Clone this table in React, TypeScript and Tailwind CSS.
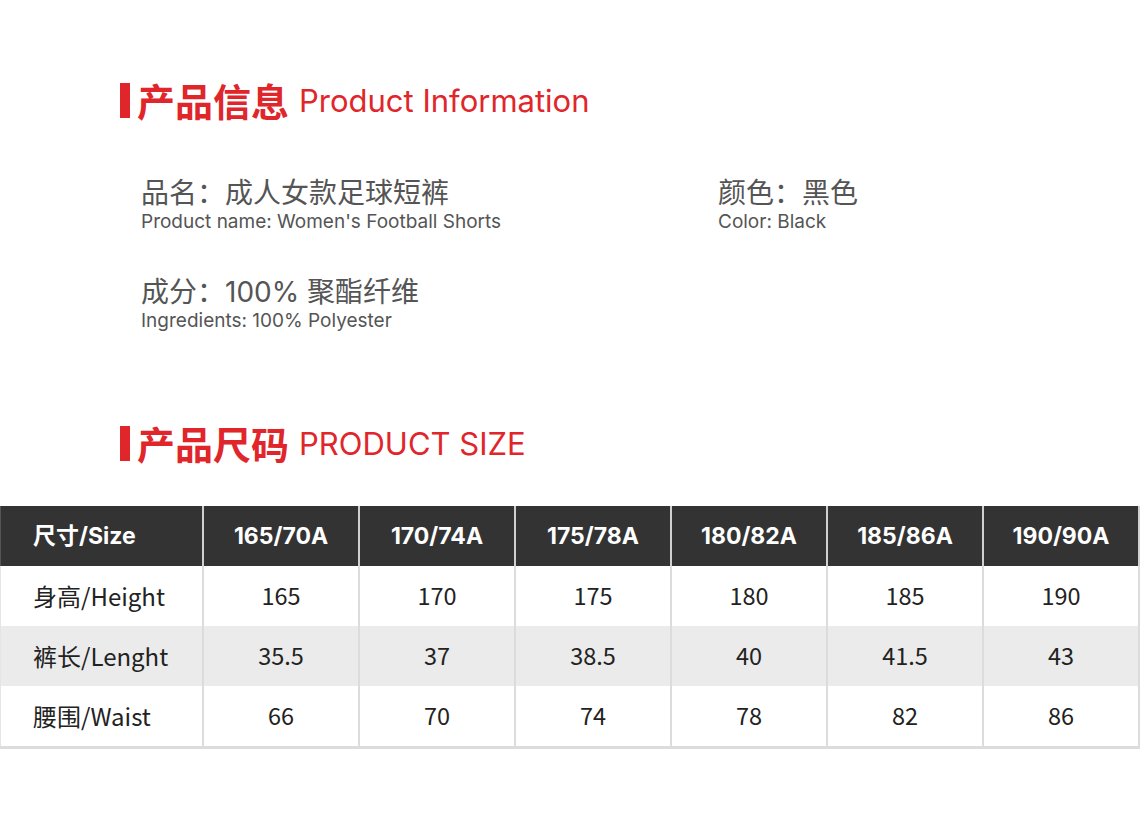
const sizes = ["165/70A", "170/74A", "175/78A", "180/82A", "185/86A", "190/90A"];

const rows = [
  { label: "身高/Height", values: ["165", "170", "175", "180", "185", "190"], bg: "bg-white" },
  { label: "裤长/Lenght", values: ["35.5", "37", "38.5", "40", "41.5", "43"], bg: "bg-[#ebebeb]" },
  { label: "腰围/Waist", values: ["66", "70", "74", "78", "82", "86"], bg: "bg-white" },
];

const latin = "font-['Inter','Noto_Sans_CJK_SC',sans-serif]";
const cjk = "font-['Noto_Sans_CJK_SC',sans-serif]";

function SectionTitle(props: { cn: string; en: string }) {
  return (
    <div className="flex h-[40px] items-center pl-[120px]">
      <div className="h-[35px] w-[10px] bg-[#e0262b]" />
      <span className={`ml-[7px] text-[38px] font-bold leading-none text-[#e0262b] ${cjk}`}>{props.cn}</span>
      <span className={`ml-[10px] text-[31px] leading-none text-[#e0262b] ${latin}`}>{props.en}</span>
    </div>
  );
}

function Info(props: { cn: string; en: string }) {
  return (
    <div>
      <div className={`h-[34px] text-[28px] leading-[34px] text-[#555] ${latin}`}>{props.cn}</div>
      <div className={`h-[24px] text-[19px] leading-[24px] text-[#555] ${latin}`}>{props.en}</div>
    </div>
  );
}

export default function App() {
  return (
    <div className="h-[819px] w-[1141px] overflow-hidden bg-white pt-[80px]">
      <SectionTitle cn="产品信息" en="Product Information" />

      <div className="mt-[56px] grid grid-cols-[577px_1fr] pl-[141px]">
        <Info cn="品名：成人女款足球短裤" en="Product name: Women's Football Shorts" />
        <Info cn="颜色：黑色" en="Color: Black" />
      </div>
      <div className="mt-[41px] pl-[141px]">
        <Info cn="成分：100% 聚酯纤维" en="Ingredients: 100% Polyester" />
      </div>

      <div className="mt-[90px]">
        <SectionTitle cn="产品尺码" en="PRODUCT SIZE" />
      </div>

      <div className="mt-[43px] w-[1140px] border-b-[3px] border-[#dcdcdc]">
        <div className="grid h-[60px] grid-cols-[202px_repeat(5,156px)_158px] bg-[#333]">
          <div className={`flex items-center border-l border-[#555] pl-[32px] text-[23px] font-bold text-white ${latin}`}>
            尺寸/Size
          </div>
          {sizes.map((s, i) => (
            <div
              key={s}
              className={`flex items-center justify-center border-l-2 border-[#d0d0d0] text-[23px] font-bold text-white ${latin} ${i === sizes.length - 1 ? "border-r-2" : ""}`}
            >
              {s}
            </div>
          ))}
        </div>
        {rows.map((r) => (
          <div key={r.label} className={`grid h-[60px] grid-cols-[202px_repeat(5,156px)_158px] ${r.bg}`}>
            <div className={`flex items-center border-l border-[#e5e5e5] pl-[32px] text-[24px] text-[#222] ${cjk}`}>
              {r.label}
            </div>
            {r.values.map((v, i) => (
              <div
                key={i}
                className={`flex items-center justify-center border-l-2 border-[#dcdcdc] text-[23.5px] text-[#222] ${cjk} ${i === r.values.length - 1 ? "border-r-2" : ""}`}
              >
                {v}
              </div>
            ))}
          </div>
        ))}
      </div>
    </div>
  );
}
